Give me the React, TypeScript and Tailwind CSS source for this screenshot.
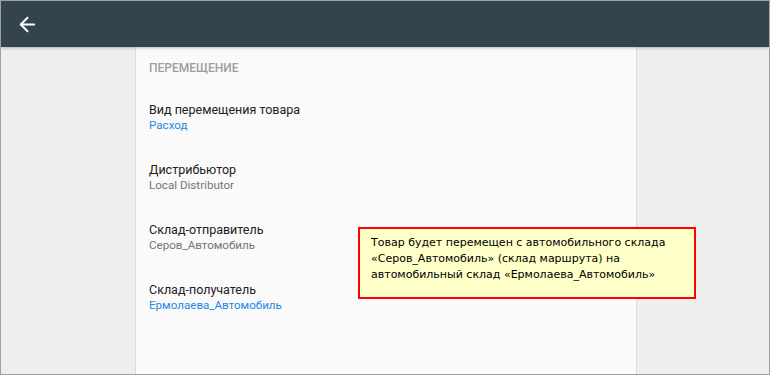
import { ArrowLeft } from 'lucide-react';

const fields = [
  { label: 'Вид перемещения товара', value: 'Расход', blue: true },
  { label: 'Дистрибьютор', value: 'Local Distributor', blue: false },
  { label: 'Склад-отправитель', value: 'Серов_Автомобиль', blue: false },
  { label: 'Склад-получатель', value: 'Ермолаева_Автомобиль', blue: true },
];

export default function App() {
  return (
    <div className="w-[770px] h-[375px] border border-[#a0a0a0] flex flex-col overflow-hidden bg-[#eeeeee] font-['Roboto',sans-serif] relative">
      {/* Header */}
      <div className="h-[46px] shrink-0 bg-[#34444f] flex items-center px-[15px] shadow-[0_1px_3px_rgba(0,0,0,0.25)] z-10">
        <ArrowLeft size={23} strokeWidth={2} className="text-white" />
      </div>

      {/* Body */}
      <div className="flex-1 flex">
        <div className="w-[134px] shrink-0" />
        <div className="w-[502px] bg-[#fafafa] border-x border-[#dcdcdc] px-[13px] pt-[14px]">
          <div className="text-[12px] font-medium text-[#9e9e9e] uppercase leading-[14px]">Перемещение</div>
          <div className="flex flex-col gap-[30px] mt-[27px]">
            {fields.map((f) => (
              <div key={f.label} className="flex flex-col">
                <span className="text-[12.5px] text-[#212121] leading-[16px]">{f.label}</span>
                <span className={`text-[11.6px] leading-[14px] ${f.blue ? 'text-[#1e88e5]' : 'text-[#757575]'}`}>{f.value}</span>
              </div>
            ))}
          </div>
        </div>
      </div>

      {/* Callout */}
      <div className="absolute left-[357px] top-[226px] w-[338px] h-[72px] border-2 border-[#ff0000] bg-[#ffffc8] pl-[11px] pt-[6px] font-['DejaVu_Sans',sans-serif] text-[11px] leading-[16px] text-black">
        Товар будет перемещен с автомобильного склада<br />
        «Серов_Автомобиль» (склад маршрута) на<br />
        автомобильный склад «Ермолаева_Автомобиль»
      </div>
    </div>
  );
}
